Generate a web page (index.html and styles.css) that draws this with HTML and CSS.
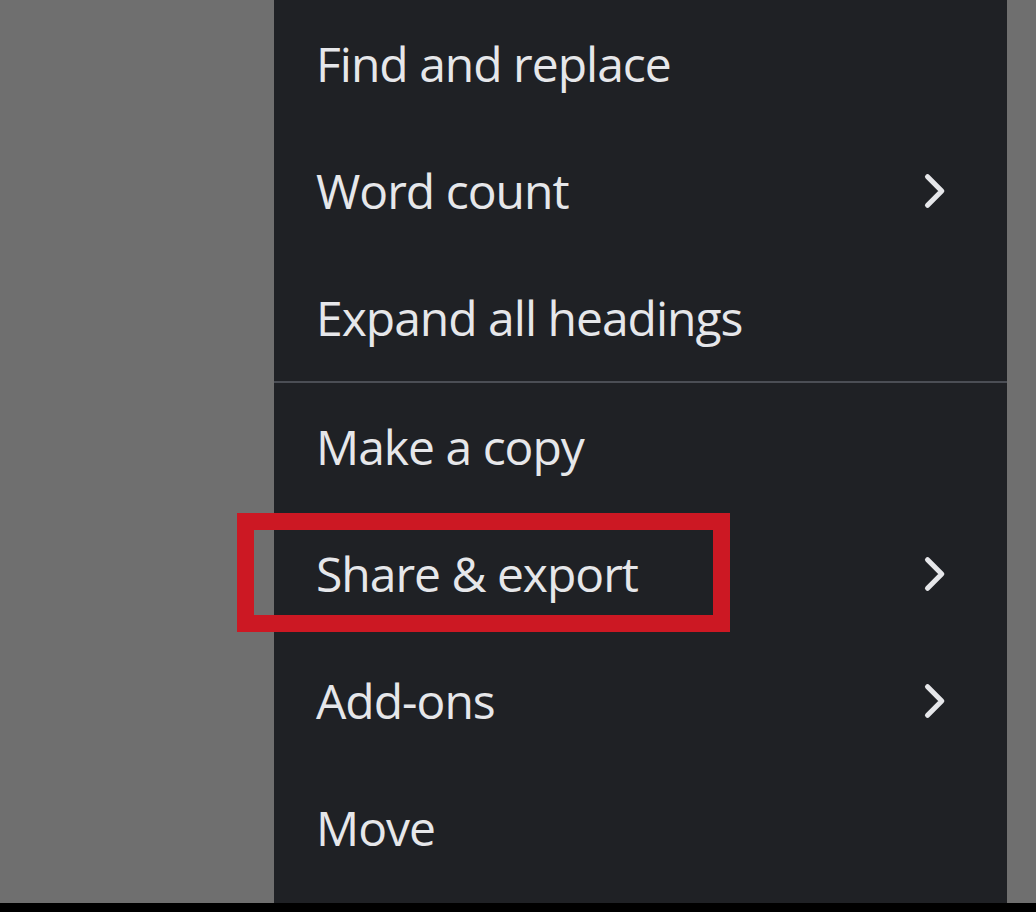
FILE: index.html
```html
<!DOCTYPE html>
<html lang="en">

<head>
    <meta charset="UTF-8">
    <meta name="viewport" content="width=device-width, initial-scale=1.0">
    <title>Docs Menu</title>
    <link rel="stylesheet" href="styles.css">
</head>

<body>
    <div class="screen">
        <div class="menu">
            <div class="menu-item">Find and replace</div>
            <div class="menu-item">
                <span>Word count</span>
                <svg class="chevron" viewBox="0 0 24 24"><polyline points="9.5,6.5 15,12 9.5,17.5" /></svg>
            </div>
            <div class="menu-item">Expand all headings</div>

            <div class="divider"></div>

            <div class="menu-item">Make a copy</div>
            <div class="menu-item highlighted">
                <span>Share &amp; export</span>
                <svg class="chevron" viewBox="0 0 24 24"><polyline points="9.5,6.5 15,12 9.5,17.5" /></svg>
                <!-- Annotation box -->
                <div class="annotation"></div>
            </div>
            <div class="menu-item">
                <span>Add-ons</span>
                <svg class="chevron" viewBox="0 0 24 24"><polyline points="9.5,6.5 15,12 9.5,17.5" /></svg>
            </div>
            <div class="menu-item">Move</div>
        </div>
    </div>
    <div class="bottom-bar"></div>
</body>

</html>
```

FILE: styles.css
```css
/* Basic Reset */
* {
    margin: 0;
    padding: 0;
    box-sizing: border-box;
}

body {
    font-family: 'Open Sans', 'Roboto', sans-serif;
    background-color: #6f6f6f;
    width: 1036px;
    height: 912px;
    overflow: hidden;
    display: flex;
    flex-direction: column;
}

.screen {
    height: 903px;
    display: flex;
}

/* Menu panel */
.menu {
    margin-left: 274px;
    width: 733px;
    height: 100%;
    background-color: #1f2125;
}

.menu-item {
    position: relative;
    height: 127px;
    display: flex;
    align-items: center;
    justify-content: space-between;
    padding-left: 42px;
    padding-right: 42px;
    font-size: 48px;
    color: #e6e7ea;
    letter-spacing: -1px;
}

.chevron {
    width: 62px;
    height: 62px;
    fill: none;
    stroke: #e6e7ea;
    stroke-width: 2;
    stroke-linecap: round;
    stroke-linejoin: round;
}

.divider {
    height: 2px;
    background-color: #4b4e55;
}

/* Red annotation box */
.annotation {
    position: absolute;
    left: -37px;
    top: 3px;
    width: 493px;
    height: 119px;
    border: 17px solid #cc1823;
}

.bottom-bar {
    height: 9px;
    background-color: #000;
}
```
